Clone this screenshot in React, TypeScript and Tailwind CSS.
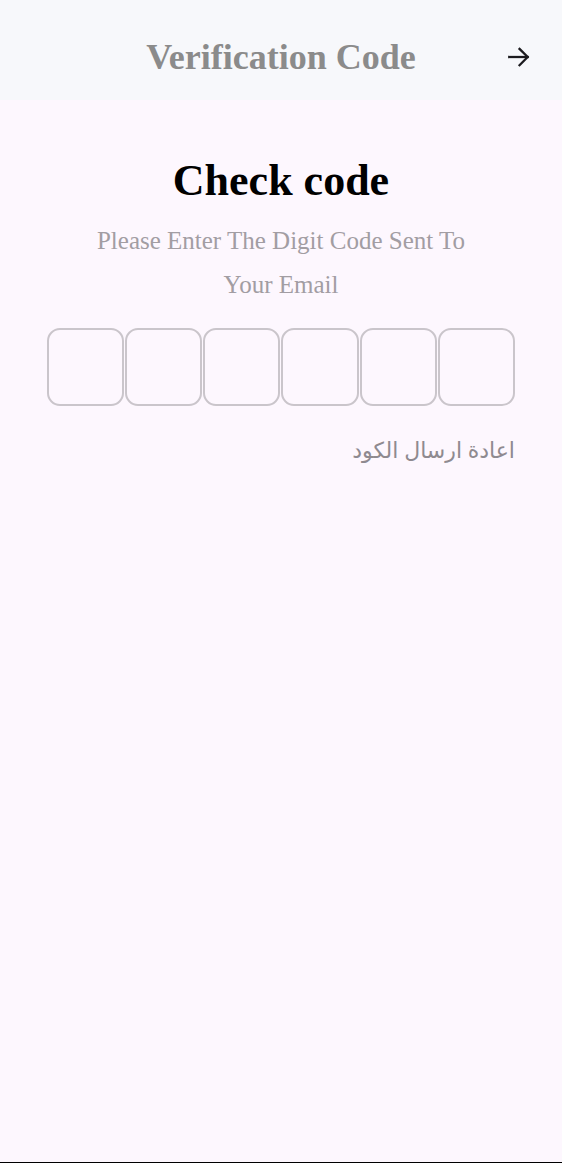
import React from 'react'

const serif = { fontFamily: '"Liberation Serif", "DejaVu Serif", serif' }

const App = () => {
  const digits = [0, 1, 2, 3, 4, 5]

  return (
    <div className="min-h-[1163px] flex flex-col bg-[#fdf7fe]">
      {/* Header */}
      <header className="h-[100px] pt-[14px] bg-[#f7f8fb] grid grid-cols-[1fr_auto_1fr] items-center">
        <div />
        <h1 className="text-[36px] font-bold text-[#8b8b8b] leading-none" style={serif}>
          Verification Code
        </h1>
        <div className="flex justify-end pr-[30px]">
          <svg width="26" height="26" viewBox="0 0 24 24" fill="none" stroke="#1c1b1f" strokeWidth="2.1" strokeLinecap="square">
            <path d="M3 12h17" />
            <path d="M12.5 4.5 20 12l-7.5 7.5" />
          </svg>
        </div>
      </header>

      {/* Body */}
      <main className="flex-1 flex flex-col items-center px-[47px]">
        <h2 className="mt-[54px] text-[44px] font-bold text-black leading-[53px]" style={serif}>
          Check code
        </h2>
        <p className="mt-[12px] max-w-[400px] text-center text-[25px] leading-[44px] text-[#a29da3]" style={serif}>
          Please Enter The Digit Code Sent To Your Email
        </p>

        <div className="mt-[21px] w-full grid grid-cols-6 gap-[1px]">
          {digits.map((d) => (
            <input
              key={d}
              type="text"
              maxLength={1}
              className="h-[78px] w-full rounded-[13px] border-2 border-[#cac5cb] bg-transparent text-center text-2xl outline-none"
            />
          ))}
        </div>

        <div className="mt-[27px] w-full flex justify-end">
          <span
            dir="rtl"
            className="text-[22px] leading-[33px] text-[#8f8a90]"
            style={{ fontFamily: '"Noto Sans", "DejaVu Sans", sans-serif' }}
          >
            اعادة ارسال الكود
          </span>
        </div>
      </main>

      <div className="h-px bg-black" />
    </div>
  )
}

export default App
